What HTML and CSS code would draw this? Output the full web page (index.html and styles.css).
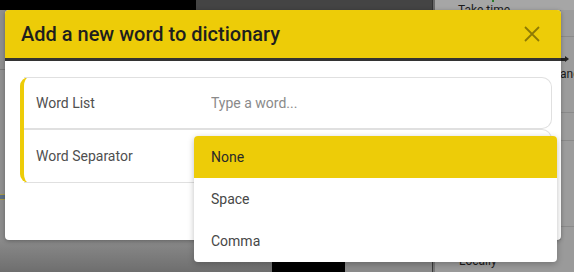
FILE: index.html
```html
<!DOCTYPE html>
<html>
<head>
<meta charset="utf-8">
<link rel="stylesheet" href="styles.css">
</head>
<body>
<div class="page">
  <div class="band band-top">
    <div class="blk blk-black w196"></div>
    <div class="blk blk-dark w236"></div>
    <div class="vline"></div>
    <div class="blk blk-light grow"><span class="bgtext take">Take time</span><span class="dot"></span></div>
  </div>
  <div class="middle">
    <div class="side-left">
      <div class="sl-a"></div>
      <div class="sl-b"></div>
      <div class="sl-c"></div>
      <div class="sl-d"></div>
    </div>
    <div class="center"></div>
    <div class="side-right">
      <div class="sr-line l1"></div>
      <div class="sr-arrow"></div>
      <span class="bgtext anc">and</span>
      <div class="sr-line l2"></div>
      <div class="sr-line l3"></div>
      <div class="sr-line l4"></div>
    </div>
  </div>
  <div class="band band-bottom">
    <div class="blk blk-grad w272"></div>
    <div class="blk blk-black w73"></div>
    <div class="blk blk-mid w87"></div>
    <div class="vline vline-b"></div>
    <div class="blk blk-light2 grow"><span class="bgtext loc">Locally</span></div>
  </div>

  <div class="modal">
    <div class="modal-header">
      <h2 class="modal-title">Add a new word to dictionary</h2>
      <button class="close" aria-label="Close">
        <svg width="16" height="16" viewBox="0 0 16 16"><path d="M1 1 L15 15 M15 1 L1 15" stroke="rgba(0,0,0,0.4)" stroke-width="1.8" fill="none"/></svg>
      </button>
    </div>
    <div class="modal-body">
      <div class="field-card">
        <div class="row row-1">
          <label class="label">Word List</label>
          <input class="input" type="text" placeholder="Type a word...">
        </div>
        <div class="row row-2">
          <label class="label">Word Separator</label>
          <div class="select"></div>
        </div>
      </div>
    </div>
    <ul class="dropdown">
      <li class="opt active">None</li>
      <li class="opt">Space</li>
      <li class="opt">Comma</li>
    </ul>
  </div>
</div>
</body>
</html>
```

FILE: styles.css
```css
* { box-sizing: border-box; }
html, body { margin: 0; padding: 0; }
body {
  width: 574px;
  height: 272px;
  overflow: hidden;
  font-family: Roboto, "Liberation Sans", sans-serif;
  background: #999;
}
.page {
  position: relative;
  width: 574px;
  height: 272px;
  display: flex;
  flex-direction: column;
}
.band { display: flex; }
.band-top { height: 10px; }
.band-bottom { height: 32px; }
.blk { height: 100%; position: relative; overflow: hidden; }
.grow { flex: 1; }
.w196 { width: 196px; }
.w236 { width: 236px; }
.w272 { width: 272px; }
.w73 { width: 73px; }
.w87 { width: 87px; }
.blk-black { background: #000; }
.blk-dark { background: #444; }
.blk-light { background: #a6a6a6; }
.blk-light2 { background: #9a9a9a; }
.blk-mid { background: #8a8a8a; }
.blk-grad { background: linear-gradient(180deg, #8a8a8a, #6e6e6e); }
.vline { width: 3px; background: #6a6a6a; border-left: 1px solid #333; }
.vline-b { background: #777; border-left: 1px solid #3a3a3a; }
.bgtext {
  position: absolute;
  font-size: 12px;
  color: #1a1a1a;
  white-space: nowrap;
}
.take { left: 23px; top: 3px; }
.dot { position: absolute; left: 57px; top: 0; width: 2px; height: 2px; background: #2a7a2a; }
.loc { left: 24px; top: 14px; }

.middle { flex: 1; display: flex; }
.side-left {
  width: 5px;
  background: #8c8c8c;
  display: flex;
  flex-direction: column;
}
.sl-a { height: 60px; background: #8e8e8e; border-bottom: 1px solid #777; }
.sl-b { height: 124px; background: #909090; }
.sl-c { height: 6px; background: #5c6f86; border-top: 1px solid #a79a4a; border-bottom: 1px solid #a79a4a; }
.sl-d { flex: 1; background: #8c8c8c; }
.center { flex: 1; background: #888; }
.side-right {
  width: 13px;
  background: #9c9c9c;
  position: relative;
}
.sr-line { position: absolute; left: 0; right: 0; height: 1px; background: #8a8a8a; }
.l1 { top: 26px; }
.l2 { top: 102px; }
.l3 { top: 130px; }
.l4 { top: 216px; }
.sr-arrow { position: absolute; left: 0; top: 48px; width: 5px; height: 3px; background: #222; }
.sr-arrow::after {
  content: "";
  position: absolute;
  left: 4px; top: -2px;
  border-left: 4px solid #222;
  border-top: 3.5px solid transparent;
  border-bottom: 3.5px solid transparent;
}
.anc { left: -1px; top: 57px; }

/* modal */
.modal {
  position: absolute;
  left: 5px;
  top: 10px;
  width: 556px;
  height: 230px;
  background: #fff;
  border-radius: 4px;
  box-shadow: 0 1px 4px rgba(0,0,0,0.3);
}
.modal-header {
  height: 51px;
  background: #edcc08;
  border-bottom: 3px solid #333;
  border-radius: 4px 4px 0 0;
  display: flex;
  align-items: center;
  justify-content: space-between;
  padding: 0 21px 0 16px;
}
.modal-title {
  margin: 0;
  font-size: 20px;
  font-weight: 500;
  color: #1e1e1e;
  letter-spacing: 0;
}
.close {
  border: 0;
  background: none;
  padding: 0;
  width: 16px;
  height: 16px;
  display: flex;
}
.modal-body {
  padding: 16px 9px 0 15px;
}
.field-card {
  border-left: 4px solid #edcc08;
  border-radius: 9px;
  display: flex;
  flex-direction: column;
}
.row {
  display: flex;
  align-items: center;
  border: 1px solid #e0e0e0;
  border-left: 0;
  border-radius: 0 10px 10px 0;
  padding-left: 12px;
}
.row-1 { height: 52px; }
.row-2 { height: 54px; }
.label {
  width: 175px;
  font-size: 14px;
  color: #4f4f4f;
}
.input {
  border: 0;
  outline: none;
  font-family: inherit;
  font-size: 14px;
  padding: 0;
  color: #333;
  background: transparent;
  flex: 1;
}
.input::placeholder { color: #8a8a8a; }

.dropdown {
  position: absolute;
  left: 189px;
  top: 126px;
  width: 363px;
  margin: 0;
  padding: 0;
  list-style: none;
  background: #fff;
  border-radius: 4px;
  box-shadow: 0 2px 6px rgba(0,0,0,0.25);
}
.opt {
  height: 42px;
  display: flex;
  align-items: center;
  padding-left: 17px;
  font-size: 14px;
  color: #474747;
}
.opt.active {
  background: #edcc08;
  color: #2a2a2a;
  border-radius: 4px 4px 0 0;
}
```
